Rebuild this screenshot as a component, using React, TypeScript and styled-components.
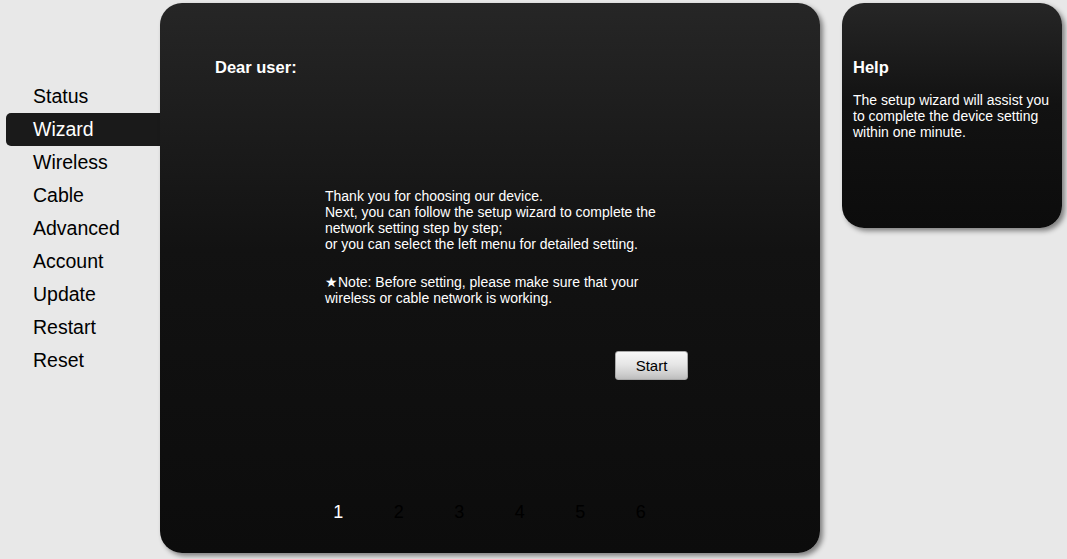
import React from 'react';
import styled, { createGlobalStyle } from 'styled-components';

const GlobalStyle = createGlobalStyle`
  html, body {
    margin: 0;
    padding: 0;
    background: #e8e8e8;
    font-family: "Liberation Sans", Arial, sans-serif;
  }
`;

const Page = styled.div`
  display: flex;
  align-items: flex-start;
  width: 1067px;
  height: 559px;
  overflow: hidden;
`;

const Sidebar = styled.nav`
  width: 154px;
  padding: 80px 0 0 6px;
  display: flex;
  flex-direction: column;
`;

const MenuItem = styled.a<{ $active?: boolean }>`
  display: block;
  height: 33px;
  line-height: 33px;
  padding-left: 27px;
  font-size: 19.5px;
  color: ${(p) => (p.$active ? '#fff' : '#000')};
  background: ${(p) => (p.$active ? '#1a1a1a' : 'transparent')};
  border-radius: 5px 0 0 5px;
  cursor: pointer;
  text-decoration: none;
`;

const Card = styled.section`
  margin-top: 3px;
  border-radius: 22px;
  background: linear-gradient(#262626 0%, #121212 45%, #0c0c0c 100%);
  box-shadow: 3px 3px 5px rgba(0, 0, 0, 0.45);
  color: #fff;
  box-sizing: border-box;
`;

const MainCard = styled(Card)`
  width: 660px;
  height: 550px;
  padding: 55px 0 30px 0;
  display: flex;
  flex-direction: column;
`;

const HelpCard = styled(Card)`
  width: 220px;
  height: 225px;
  margin-left: 22px;
  padding: 55px 10px 0 11px;
`;

const Heading = styled.h2`
  margin: 0;
  font-size: 16.5px;
  line-height: 18px;
  font-weight: bold;
`;

const MainHeading = styled(Heading)`
  padding-left: 55px;
`;

const Body = styled.div`
  margin: 112px 0 0 165px;
  width: 345px;
  font-size: 14px;
  line-height: 16px;
`;

const Para = styled.p<{ $gap?: number }>`
  margin: ${(p) => p.$gap ?? 0}px 0 0 0;
`;

const StartButton = styled.button`
  display: block;
  margin: 45px 0 0 455px;
  width: 73px;
  height: 29px;
  padding: 0;
  font-family: "Liberation Sans", Arial, sans-serif;
  font-size: 15px;
  color: #000;
  background: linear-gradient(#f7f7f7 0%, #e6e6e6 45%, #cfcfcf 80%, #bdbdbd 100%);
  border: 1px solid #a8a8a8;
  border-radius: 3px;
  cursor: pointer;
`;

const Steps = styled.div`
  margin-top: auto;
  padding-left: 148px;
  display: flex;
`;

const Step = styled.span<{ $current?: boolean }>`
  width: 60.5px;
  text-align: center;
  font-size: 18px;
  line-height: 22px;
  color: ${(p) => (p.$current ? '#fff' : '#000')};
`;

const HelpText = styled.p`
  margin: 16px 0 0 0;
  font-size: 14px;
  line-height: 16px;
`;

const menu = ['Status', 'Wizard', 'Wireless', 'Cable', 'Advanced', 'Account', 'Update', 'Restart', 'Reset'];

export default function App() {
  return (
    <>
      <GlobalStyle />
      <Page>
        <Sidebar>
          {menu.map((m) => (
            <MenuItem key={m} $active={m === 'Wizard'}>
              {m}
            </MenuItem>
          ))}
        </Sidebar>
        <MainCard>
          <MainHeading>Dear user:</MainHeading>
          <Body>
            <Para>
              Thank you for choosing our device.
              <br />
              Next, you can follow the setup wizard to complete the network setting step by step;
              <br />
              or you can select the left menu for detailed setting.
            </Para>
            <Para $gap={22}>★Note: Before setting, please make sure that your wireless or cable network is working.</Para>
          </Body>
          <StartButton>Start</StartButton>
          <Steps>
            {[1, 2, 3, 4, 5, 6].map((n) => (
              <Step key={n} $current={n === 1}>
                {n}
              </Step>
            ))}
          </Steps>
        </MainCard>
        <HelpCard>
          <Heading>Help</Heading>
          <HelpText>The setup wizard will assist you to complete the device setting within one minute.</HelpText>
        </HelpCard>
      </Page>
    </>
  );
}
